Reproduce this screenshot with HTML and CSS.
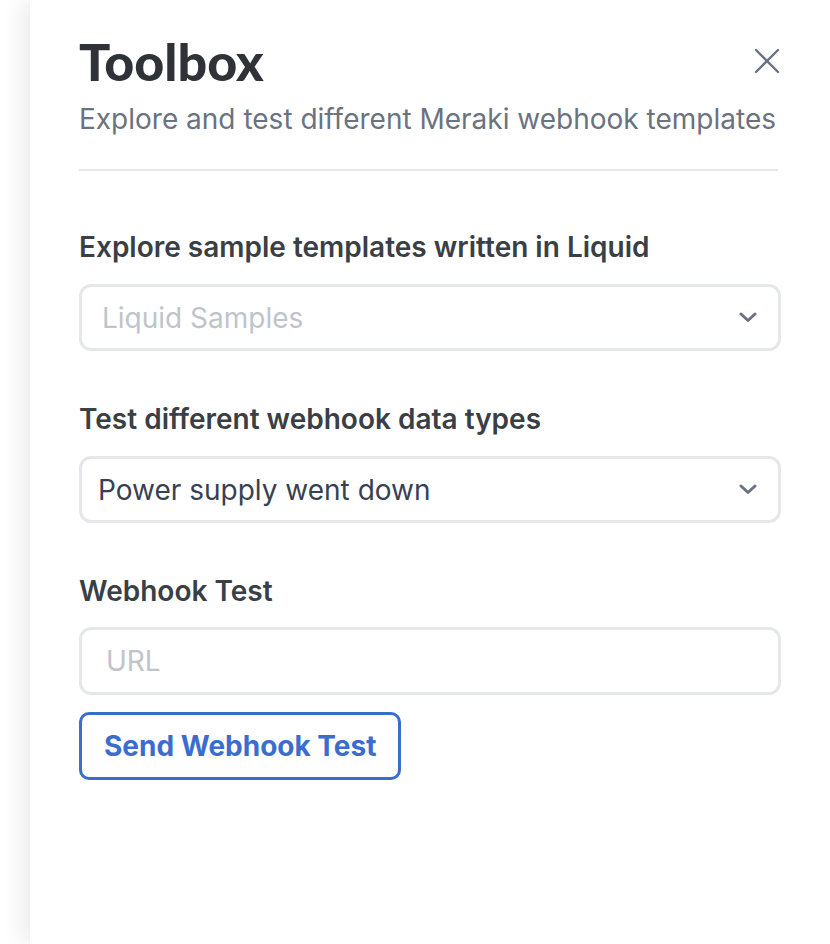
FILE: index.html
```html
<!DOCTYPE html>
<html>
<head>
<meta charset="utf-8">
<link rel="stylesheet" href="styles.css">
</head>
<body>
<div class="panel">
  <header class="head">
    <h1 class="title">Toolbox</h1>
    <button class="close" aria-label="Close">
      <svg width="26" height="26" viewBox="0 0 26 26"><path d="M2 2L24 24M24 2L2 24" stroke="#6b7280" stroke-width="2.4" stroke-linecap="round" fill="none"/></svg>
    </button>
    <p class="subtitle">Explore and test different Meraki webhook templates</p>
  </header>
  <hr class="divider">
  <section class="field first">
    <label class="label">Explore sample templates written in Liquid</label>
    <div class="select placeholder">
      <span>Liquid Samples</span>
      <svg class="chev" width="18" height="11" viewBox="0 0 18 11"><path d="M2 2L9 8.5L16 2" stroke="#6b7280" stroke-width="3" fill="none" stroke-linecap="round" stroke-linejoin="round"/></svg>
    </div>
  </section>
  <section class="field">
    <label class="label">Test different webhook data types</label>
    <div class="select">
      <span>Power supply went down</span>
      <svg class="chev" width="18" height="11" viewBox="0 0 18 11"><path d="M2 2L9 8.5L16 2" stroke="#6b7280" stroke-width="3" fill="none" stroke-linecap="round" stroke-linejoin="round"/></svg>
    </div>
  </section>
  <section class="field">
    <label class="label">Webhook Test</label>
    <div class="input"><span>URL</span></div>
    <button class="btn">Send Webhook Test</button>
  </section>
</div>
</body>
</html>
```
FILE: styles.css
```css
html, body {
  margin: 0;
  padding: 0;
  height: 100%;
  background: #ffffff;
}
body {
  font-family: Inter, "Liberation Sans", sans-serif;
  color: #374151;
}
.panel {
  margin-left: 30px;
  min-height: 100%;
  box-sizing: border-box;
  background: #fff;
  box-shadow: -6px 0 22px rgba(0,0,0,0.09);
  padding: 32px 49px 40px 49px;
}
.head {
  display: grid;
  grid-template-columns: 1fr auto;
  align-items: start;
}
.title {
  margin: 0;
  font-family: Lato, sans-serif;
  font-weight: 900;
  font-size: 52px;
  line-height: 58px;
  color: #2f3237;
}
.subtitle {
  grid-column: 1 / -1;
  margin: 8px 0 0 0;
  font-size: 28px;
  line-height: 42px;
  color: #6b7280;
  white-space: nowrap;
}
.close {
  border: 0;
  background: none;
  padding: 0;
  margin-top: 16px;
  margin-right: 1px;
  width: 26px;
  height: 26px;
}
.close svg { display: block; }
.divider {
  border: 0;
  height: 2px;
  background: #e5e7eb;
  margin: 29px 3px 0 0;
}
.field {
  display: flex;
  flex-direction: column;
}
.label {
  font-weight: 600;
  font-size: 28px;
  line-height: 42px;
  color: #3a3f46;
  margin-top: 47px;
  margin-bottom: 16px;
}
.field.first .label { margin-top: 55px; }
.select, .input {
  display: flex;
  align-items: center;
  justify-content: space-between;
  height: 67px;
  box-sizing: border-box;
  border: 3px solid #e5e7eb;
  border-radius: 12px;
  padding: 0 21px 0 16px;
  font-size: 28px;
  color: #374151;
}
.select.placeholder { color: #c0c4ca; padding-left: 20px; }
.input { color: #c0c4ca; padding-left: 24px; height: 68px; margin-top: -1px; }
.chev { display: block; }
.btn {
  align-self: flex-start;
  margin-top: 17px;
  height: 68px;
  box-sizing: border-box;
  padding: 0 22px;
  border: 3px solid #3b6dce;
  border-radius: 10px;
  background: #fff;
  color: #3b6dce;
  font-family: Inter, "Liberation Sans", sans-serif;
  font-weight: 700;
  font-size: 28px;
}
```
